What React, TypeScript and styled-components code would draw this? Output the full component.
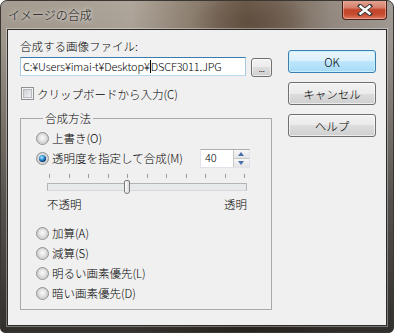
import styled, { createGlobalStyle } from 'styled-components'

const GlobalStyle = createGlobalStyle`
  html, body {
    margin: 0;
    padding: 0;
    background: #ffffff;
  }
  body {
    font-family: "Noto Sans CJK JP", "Noto Sans", sans-serif;
    font-size: 11.5px;
    font-weight: 300;
    color: #000;
  }
`

const Window = styled.div`
  width: 394px;
  height: 333px;
  box-sizing: border-box;
  border: 1px solid #3a3632;
  border-radius: 7px 7px 5px 5px;
  overflow: hidden;
  display: flex;
  flex-direction: column;
  background:
    linear-gradient(to bottom, rgba(20, 19, 18, 0) 0, rgba(20, 19, 18, 0.05) 40px, rgba(20, 19, 18, 0.55) 200px, rgba(20, 19, 18, 0.8) 333px),
    radial-gradient(ellipse 60px 30px at 250px 20px, rgba(90, 70, 55, 0.6), rgba(90, 70, 55, 0)),
    linear-gradient(to right, #a69d92 0, #a89f94 60px, #b0a79c 130px, #8f8172 190px, #6f5d4d 245px, #7d6e61 290px, #958b82 330px, #a39d97 394px);
`

const TitleBar = styled.div`
  height: 28px;
  display: flex;
  justify-content: space-between;
  align-items: flex-start;
  flex-shrink: 0;
`

const Title = styled.div`
  margin: 7px 0 0 7px;
  font-size: 12px;
  line-height: 14px;
  color: #111;
  text-shadow: 0 0 6px rgba(255, 255, 255, 0.85), 0 0 3px rgba(255, 255, 255, 0.7);
`

const CloseButton = styled.div`
  width: 45px;
  height: 20px;
  margin: -1px 6px 0 0;
  box-sizing: border-box;
  border: 1px solid #4a2119;
  border-top: none;
  border-radius: 0 0 4px 4px;
  display: flex;
  align-items: center;
  justify-content: center;
  background: linear-gradient(to bottom, #e4a898 0%, #d6806b 40%, #c2452b 52%, #c54a2e 75%, #de7a62 100%);
  box-shadow: inset 0 0 0 1px rgba(255, 210, 200, 0.45);
`

const Client = styled.div`
  margin: 0 6px;
  height: 297px;
  box-sizing: border-box;
  border: 1px solid #2c2b2a;
  box-shadow: 0 0 0 1px rgba(255, 255, 255, 0.35);
  background: #f0f0f0;
  display: flex;
  padding: 8px 10px 0 12px;
`

const LeftColumn = styled.div`
  width: 252px;
  display: flex;
  flex-direction: column;
`

const FieldLabel = styled.div`
  line-height: 16px;
  height: 16px;
`

const InputRow = styled.div`
  margin-top: 3px;
  display: flex;
  gap: 5px;
  align-items: flex-start;
`

const TextInput = styled.div`
  width: 226px;
  height: 19px;
  box-sizing: border-box;
  border: 1px solid #a4c9e3;
  border-top-color: #3d7bad;
  border-bottom-color: #b7d9ed;
  background: #fff;
  padding: 0 2px;
  font-size: 11px;
  letter-spacing: -0.15px;
  line-height: 17px;
  white-space: nowrap;
  overflow: hidden;
  display: flex;
  align-items: center;
`

const Caret = styled.span`
  display: inline-block;
  width: 0;
  height: 13px;
  border-left: 1px solid #000;
`

const BrowseButton = styled.div`
  width: 21px;
  height: 19px;
  margin-top: 1px;
  box-sizing: border-box;
  border: 1px solid #707070;
  border-radius: 3px;
  background: linear-gradient(to bottom, #f2f2f2 0%, #ebebeb 50%, #dddddd 50%, #cfcfcf 100%);
  box-shadow: inset 0 0 0 1px rgba(255, 255, 255, 0.6);
  display: flex;
  align-items: flex-end;
  justify-content: center;
  padding-bottom: 3px;
  font-size: 10px;
  line-height: 10px;
  letter-spacing: -0.5px;
`

const CheckRow = styled.div`
  margin-top: 8px;
  height: 17px;
  display: flex;
  align-items: center;
  gap: 3px;
  padding-left: 1px;
`

const CheckBox = styled.span`
  width: 13px;
  height: 13px;
  box-sizing: border-box;
  border: 1px solid #8e8f8f;
  background: linear-gradient(135deg, #c4c7cc 0%, #e4e6e8 60%, #f6f6f6 100%);
  box-shadow: inset 0 0 0 1px #f4f4f4, inset 0 0 0 2px #b5b9be;
`

const Group = styled.fieldset`
  margin: 9px 0 0;
  padding: 0 0 6px 15px;
  border: 1px solid #a9a9a9;
  min-width: 0;
`

const GroupTitle = styled.legend`
  margin-left: 7px;
  padding: 0 2px;
  line-height: 14px;
`

const OptionRow = styled.div`
  height: 20px;
  display: flex;
  align-items: center;
  gap: 3px;
`

const Radio = styled.span<{ $checked?: boolean }>`
  position: relative;
  width: 13px;
  height: 13px;
  box-sizing: border-box;
  border-radius: 50%;
  border: 1px solid #8f9090;
  background: radial-gradient(circle at 50% 45%, #fbfbfb 0, #e6e6e6 3px, #cdcdcd 5.5px, #f2f2f2 6px);
  flex-shrink: 0;

  &::after {
    content: '';
    display: ${p => (p.$checked ? 'block' : 'none')};
    position: absolute;
    left: 2px;
    top: 2px;
    width: 7px;
    height: 7px;
    border-radius: 50%;
    background: radial-gradient(circle at 40% 35%, #bfe8ff 0, #3fa2e0 2px, #1460a8 3.5px, #0b3d75 4px);
  }
`

const SpinBox = styled.div`
  margin-left: 14px;
  width: 50px;
  height: 19px;
  box-sizing: border-box;
  border: 1px solid #e2e3ea;
  border-top-color: #abadb3;
  background: #fff;
  display: flex;
  align-self: flex-end;
`

const SpinValue = styled.div`
  flex: 1;
  padding-left: 4px;
  line-height: 15px;
  font-size: 11px;
`

const SpinButtons = styled.div`
  width: 15px;
  display: flex;
  flex-direction: column;
  border-left: 1px solid #c8c8c8;
`

const SpinHalf = styled.div<{ $down?: boolean }>`
  flex: 1;
  display: flex;
  align-items: center;
  justify-content: center;
  background: linear-gradient(to bottom, #f7f7f7, #e4e4e4);
  border-top: ${p => (p.$down ? '1px solid #c8c8c8' : 'none')};

  &::before {
    content: '';
    border-left: 3.5px solid transparent;
    border-right: 3.5px solid transparent;
    ${p => (p.$down ? 'border-top: 4px solid #4b6fad;' : 'border-bottom: 4px solid #4b6fad;')}
  }
`

const SliderBlock = styled.div`
  margin-left: 11px;
  width: 200px;
`

const Ticks = styled.div`
  margin-top: 6px;
  height: 4px;
  padding: 0 2px;
  display: flex;
  justify-content: space-between;
`

const Tick = styled.span`
  width: 1px;
  height: 4px;
  background: #9a9a9a;
`

const Track = styled.div`
  position: relative;
  margin-top: 5px;
  height: 8px;
  box-sizing: border-box;
  border: 1px solid #b4b4b4;
  border-bottom-color: #d8d8d8;
  background: #e7eaea;
`

const Thumb = styled.span`
  position: absolute;
  top: -4px;
  width: 6px;
  height: 14px;
  box-sizing: border-box;
  border: 1px solid #7a7a7a;
  border-radius: 2px 2px 3px 3px;
  background: linear-gradient(to right, #fdfdfd, #dcdcdc);
`

const ScaleLabels = styled.div`
  margin-top: 5px;
  line-height: 16px;
  display: flex;
  justify-content: space-between;
`

const OptionList = styled.div<{ $gap: number }>`
  margin-top: ${p => p.$gap}px;
  display: flex;
  flex-direction: column;
`

const RightColumn = styled.div`
  margin-left: 16px;
  padding-top: 12px;
  display: flex;
  flex-direction: column;
  gap: 9px;
`

const Button = styled.div<{ $default?: boolean }>`
  width: 88px;
  height: 23px;
  box-sizing: border-box;
  border: 1px solid ${p => (p.$default ? '#3c7fb1' : '#707070')};
  border-radius: 3px;
  background: ${p =>
    p.$default
      ? 'linear-gradient(to bottom, #eaf6fd 0%, #d9f0fc 50%, #bee6fd 50%, #a7d9f5 100%)'
      : 'linear-gradient(to bottom, #f2f2f2 0%, #ebebeb 50%, #dddddd 50%, #cfcfcf 100%)'};
  box-shadow: inset 0 0 0 1px ${p => (p.$default ? 'rgba(200, 240, 255, 0.9)' : 'rgba(255, 255, 255, 0.6)')};
  display: flex;
  align-items: center;
  justify-content: center;
  line-height: 14px;
`

const sliderValue = 40

export default function App() {
  return (
    <>
      <GlobalStyle />
      <Window>
        <TitleBar>
          <Title>イメージの合成</Title>
          <CloseButton>
            <svg width="16" height="12" viewBox="0 0 16 12">
              <path d="M3 2 L13 10 M13 2 L3 10" stroke="#3a3a3a" strokeWidth="4.2" strokeLinecap="square" />
              <path d="M3.5 2.5 L12.5 9.5 M12.5 2.5 L3.5 9.5" stroke="#ffffff" strokeWidth="2.4" strokeLinecap="square" />
            </svg>
          </CloseButton>
        </TitleBar>
        <Client>
          <LeftColumn>
            <FieldLabel>合成する画像ファイル:</FieldLabel>
            <InputRow>
              <TextInput>
                C:¥Users¥imai-t¥Desktop¥<Caret />DSCF3011.JPG
              </TextInput>
              <BrowseButton>...</BrowseButton>
            </InputRow>
            <CheckRow>
              <CheckBox />
              <span>クリップボードから入力(C)</span>
            </CheckRow>
            <Group>
              <GroupTitle>合成方法</GroupTitle>
              <OptionList $gap={3}>
                <OptionRow>
                  <Radio />
                  <span>上書き(O)</span>
                </OptionRow>
                <OptionRow>
                  <Radio $checked />
                  <span>透明度を指定して合成(M)</span>
                  <SpinBox>
                    <SpinValue>40</SpinValue>
                    <SpinButtons>
                      <SpinHalf />
                      <SpinHalf $down />
                    </SpinButtons>
                  </SpinBox>
                </OptionRow>
              </OptionList>
              <SliderBlock>
                <Ticks>
                  {Array.from({ length: 11 }).map((_, i) => (
                    <Tick key={i} />
                  ))}
                </Ticks>
                <Track>
                  <Thumb style={{ left: `${(sliderValue / 100) * 194 - 2}px` }} />
                </Track>
                <ScaleLabels>
                  <span>不透明</span>
                  <span>透明</span>
                </ScaleLabels>
              </SliderBlock>
              <OptionList $gap={11}>
                <OptionRow>
                  <Radio />
                  <span>加算(A)</span>
                </OptionRow>
                <OptionRow>
                  <Radio />
                  <span>減算(S)</span>
                </OptionRow>
                <OptionRow>
                  <Radio />
                  <span>明るい画素優先(L)</span>
                </OptionRow>
                <OptionRow>
                  <Radio />
                  <span>暗い画素優先(D)</span>
                </OptionRow>
              </OptionList>
            </Group>
          </LeftColumn>
          <RightColumn>
            <Button $default>OK</Button>
            <Button>キャンセル</Button>
            <Button>ヘルプ</Button>
          </RightColumn>
        </Client>
      </Window>
    </>
  )
}
